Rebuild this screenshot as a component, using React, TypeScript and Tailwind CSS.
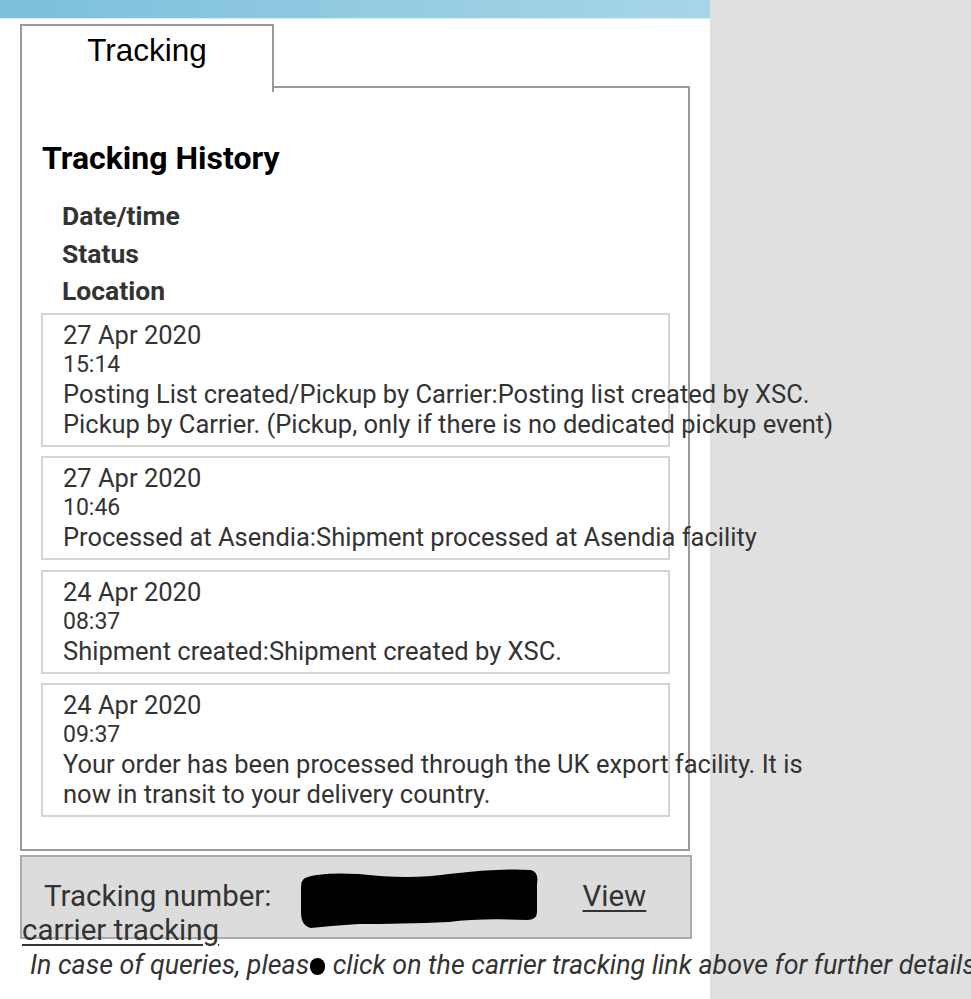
import React from 'react';

type Event = { date: string; time: string; lines: string };

const events: Event[] = [
  {
    date: '27 Apr 2020',
    time: '15:14',
    lines: 'Posting List created/Pickup by Carrier:Posting list created by XSC. Pickup by Carrier. (Pickup, only if there is no dedicated pickup event)',
  },
  {
    date: '27 Apr 2020',
    time: '10:46',
    lines: 'Processed at Asendia:Shipment processed at Asendia facility',
  },
  {
    date: '24 Apr 2020',
    time: '08:37',
    lines: 'Shipment created:Shipment created by XSC.',
  },
  {
    date: '24 Apr 2020',
    time: '09:37',
    lines: 'Your order has been processed through the UK export facility. It is now in transit to your delivery country.',
  },
];

const App: React.FC = () => {
  return (
    <div className="flex min-h-screen w-full bg-[#e0e0e0] font-['Roboto',sans-serif] text-[#333]">
      <div className="w-[710px] shrink-0 bg-white">
        {/* Top bar */}
        <div className="h-[18px] bg-gradient-to-r from-[#7bbfdb] to-[#a8d6e8]" />
        <div className="h-px bg-[#d6eef6]" />

        {/* Tab */}
        <div className="relative z-10 ml-[20px] mt-[5px] h-[68px] w-[254px] border-2 border-b-0 border-[#999] bg-white text-center">
          <span className="block pt-[6px] font-['Liberation_Sans',sans-serif] text-[31.5px] leading-[36px] text-black">Tracking</span>
        </div>

        {/* Panel */}
        <div className="-mt-[6px] ml-[20px] w-[670px] border-2 border-[#999] pb-[32px]">
          <h2 className="pl-[20px] pt-[52px] text-[32px] font-bold leading-[36px] text-black">Tracking History</h2>
          <div className="mt-[21px] pl-[40px] text-[26.5px] font-bold leading-[37.5px] text-[#333]">
            <div>Date/time</div>
            <div>Status</div>
            <div>Location</div>
          </div>

          <div className="mt-[3px] flex flex-col gap-[9.5px] pl-[19px] pr-[18px]">
            {events.map((e, i) => (
              <div key={i} className="border-2 border-[#d4d4d4] px-[20px] py-[6px]">
                <div className="w-[785px]">
                  <div className="text-[25.5px] leading-[29px]">{e.date}</div>
                  <div className="text-[23px] leading-[29px]">{e.time}</div>
                  <div className="text-[25.5px] leading-[30px]">{e.lines}</div>
                </div>
              </div>
            ))}
          </div>
        </div>

        {/* Tracking number bar */}
        <div className="ml-[20px] mt-[4px] h-[84px] w-[672px] border-2 border-[#aaa] bg-[#dcdcdc]">
          <p className="pt-[22px] indent-[22px] text-[29.5px] leading-[34px]">
            <span>Tracking number:</span>
            <span className="relative ml-[27px] mr-[44px] inline-block h-[20px] w-[240px] align-middle">
              <svg className="absolute left-0 top-[-20px]" width="240" height="60" viewBox="0 0 240 60">
                <path d="M6 10 Q20 4 60 6 Q110 12 150 6 Q200 0 232 2 Q240 4 238 16 L238 44 Q238 52 228 52 Q180 50 150 54 Q100 56 60 56 Q30 58 12 60 Q2 58 2 44 L2 20 Q2 12 6 10 Z" fill="#000" />
              </svg>
            </span>
            <a href="#" className="text-[#333] underline underline-offset-4">View carrier tracking</a>
          </p>
        </div>

        <p className="mt-[11px] whitespace-nowrap pl-[30px] text-[26.8px] italic leading-[30px]">
          In case of queries, pleas
          <span className="mx-[1px] inline-block h-[17px] w-[15px] rounded-full bg-black align-middle" />
          {' '}click on the carrier tracking link above for further details
        </p>
      </div>
      <div className="flex-1" />
    </div>
  );
};

export default App;
